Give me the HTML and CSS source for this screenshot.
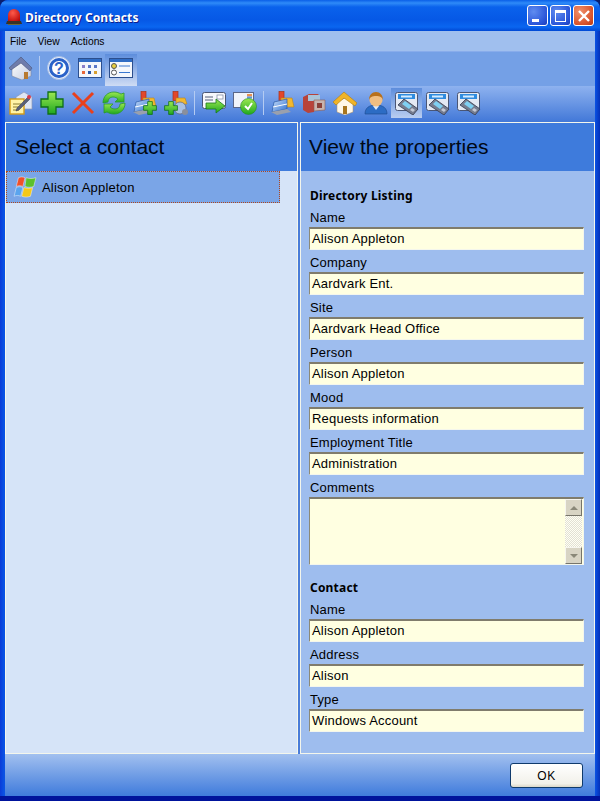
FILE: index.html
```html
<!DOCTYPE html>
<html lang="en">
<head>
  <meta charset="UTF-8" />
  <title>Directory Contacts</title>
  <link rel="stylesheet" href="styles.css">
</head>
<body>

  <!-- Shared icon parts -->
  <svg class="defs" aria-hidden="true">
    <defs>
      <linearGradient id="gGreen" x1="0" y1="0" x2="0" y2="1"><stop offset="0" stop-color="#9ce850"/><stop offset="1" stop-color="#1fa820"/></linearGradient>
      <linearGradient id="gBlue" x1="0" y1="0" x2="1" y2="1"><stop offset="0" stop-color="#cfe2fb"/><stop offset="1" stop-color="#2d6fd0"/></linearGradient>
      <linearGradient id="gPaper" x1="0" y1="0" x2="1" y2="1"><stop offset="0" stop-color="#ffffff"/><stop offset="1" stop-color="#c4cce0"/></linearGradient>
      <radialGradient id="gRed" cx="0.4" cy="0.3" r="0.8"><stop offset="0" stop-color="#ff5a4a"/><stop offset="1" stop-color="#b80404"/></radialGradient>
      <symbol id="phone" viewBox="0 0 24 24">
        <rect x="0.500" y="1.500" width="22" height="18" rx="2" fill="#e4e9f3" stroke="#4a5675"/>
        <rect x="3" y="3" width="17" height="5" fill="#2f8ce0"/>
        <path d="M6 4.500h11v2H6z" fill="#d6ecff"/>
        <path d="M3 14l6-6 14 10-5 6z" fill="#767d90" stroke="#333a4e" stroke-width=".8"/>
        <path d="M7 13l3-3 7 5-3 3z" fill="#7fd0f2"/>
        <path d="M15 19l2-2 3 2-2 2z" fill="#c4c9d4"/>
      </symbol>
      <symbol id="cabinet" viewBox="0 0 24 24">
        <rect x="8" y="0.500" width="5" height="9" fill="#e2472b" stroke="#a83218" stroke-width=".7"/>
        <path d="M10 7h11l2 9H10z" fill="#f3b82e" stroke="#b9851a" stroke-width=".6"/>
        <path d="M3 11l13-3v10L1 21z" fill="url(#gBlue)" stroke="#2a5aa8" stroke-width=".7"/>
        <path d="M2 16l14-3" stroke="#fff"/>
        <path d="M0 21l16-3 4 3-14 3z" fill="#9aa0ad"/>
      </symbol>
      <symbol id="plus" viewBox="0 0 24 24">
        <path d="M8 1h8v7h7v8h-7v7H8v-7H1V8h7z" fill="url(#gGreen)" stroke="#0f6e16" stroke-width="1.300"/>
      </symbol>
    </defs>
  </svg>

  <div class="window">

    <!-- Title bar -->
    <div class="titlebar">
      <svg class="title-icon" width="16" height="16" viewBox="0 0 16 16">
        <path d="M2 13V6a6 6 0 0 1 12 0v7z" fill="url(#gRed)"/>
        <path d="M1 12h14l1 3H0z" fill="#3a3226"/>
        <path d="M2 15h12v1H2z" fill="#6e6a3a"/>
      </svg>
      <span class="title-text">Directory Contacts</span>
      <div class="title-buttons">
        <div class="wbtn"><span class="wmin"></span></div>
        <div class="wbtn"><span class="wmax"></span></div>
        <div class="wbtn wclose">
          <svg width="12" height="12" viewBox="0 0 12 12"><path d="M1 1l10 10M11 1L1 11" stroke="#fff" stroke-width="2.400"/></svg>
        </div>
      </div>
    </div>

    <div class="client">

      <div class="menubar">
        <span>File</span>
        <span>View</span>
        <span>Actions</span>
      </div>

      <!-- Top toolbar -->
      <div class="toolbar toolbar-top">
        <div class="tool">
          <svg width="24" height="24" viewBox="0 0 24 24">
            <path d="M3 12l9-8 10 10v6l-9 4-10-4z" fill="url(#gPaper)" stroke="#7a7f90" stroke-width=".5"/>
            <path d="M0 12L12 1l11 11-2 3-9-8-10 7z" fill="#6f7cab" stroke="#4a5478" stroke-width=".6"/>
            <rect x="15" y="16" width="4" height="7" fill="#b87a30"/>
          </svg>
        </div>
        <div class="sep"></div>
        <div class="tool">
          <svg width="24" height="24" viewBox="0 0 24 24">
            <circle cx="12" cy="12" r="11.500" fill="#e4edfb" stroke="#a8bee4"/>
            <circle cx="12" cy="12" r="8.500" fill="#fff" stroke="#2a62c8" stroke-width="3"/>
            <text x="12" y="17.500" class="help-mark">?</text>
          </svg>
        </div>
        <div class="tool">
          <svg width="24" height="24" viewBox="0 0 24 24">
            <rect x=".5" y="2.500" width="23" height="19" fill="#f4f7fc" stroke="#2c4f8e"/>
            <rect x="1" y="3" width="22" height="3" fill="#2f6cc4"/>
            <path d="M4 9h3v3H4z" fill="#8a7fc8"/><path d="M10 9h3v3h-3z" fill="#5a78c8"/><path d="M16 9h3v3h-3z" fill="#5a78c8"/>
            <path d="M4 15h3v3H4z" fill="#e8683a"/><path d="M10 15h3v3h-3z" fill="#2a58a8"/><path d="M16 15h3v3h-3z" fill="#d8a030"/>
          </svg>
        </div>
        <div class="tool tool-on">
          <svg width="24" height="24" viewBox="0 0 24 24">
            <rect x=".5" y="2.500" width="23" height="19" fill="#f4f7fc" stroke="#2c4f8e"/>
            <rect x="1" y="3" width="22" height="3" fill="#2f6cc4"/>
            <circle cx="5" cy="10" r="2.500" fill="#e8d040" stroke="#555"/>
            <circle cx="5" cy="16.500" r="2.500" fill="#fff" stroke="#555"/>
            <path d="M10 10h11M10 16.500h11" stroke="#3a78d0" stroke-width="1.200"/>
          </svg>
        </div>
      </div>

      <!-- Action toolbar -->
      <div class="toolbar toolbar-main">
        <div class="tool">
          <svg width="24" height="24" viewBox="0 0 24 24">
            <path d="M7 6l8-5 8 5v12H7z" fill="#dfe6f4" stroke="#8c98b4" stroke-width=".7"/>
            <rect x="1" y="8" width="14" height="15" fill="#fff3a6" stroke="#d49a16" stroke-width="1.400"/>
            <path d="M4 13h8M4 16h8M4 19h6" stroke="#8a7a30"/>
            <path d="M8 17l11-11 2 2-11 11-3 1z" fill="#5a6078" stroke="#333a50" stroke-width=".5"/>
            <circle cx="20" cy="6" r="2" fill="#d83a4a"/>
          </svg>
        </div>
        <div class="tool"><svg width="24" height="24" viewBox="0 0 24 24"><use href="#plus"/></svg></div>
        <div class="tool">
          <svg width="24" height="24" viewBox="0 0 24 24"><path d="M2 2l20 20M22 2L2 22" stroke="#e8401c" stroke-width="3"/></svg>
        </div>
        <div class="tool">
          <svg width="24" height="24" viewBox="0 0 24 24">
            <path d="M1 12C1 5 6 1 12 1c3 0 5 1 7 2l3-1v9h-9l3-3c-1-1-3-2-5-2-3 0-5 2-5 5z" fill="url(#gGreen)" stroke="#2a9a2a" stroke-width=".8"/>
            <path d="M23 12c0 7-5 11-11 11-3 0-5-1-7-2l-3 1v-9h9l-3 3c1 1 3 2 5 2 3 0 5-2 5-5z" fill="url(#gGreen)" stroke="#2a9a2a" stroke-width=".8"/>
          </svg>
        </div>
        <div class="tool">
          <svg width="24" height="24" viewBox="0 0 24 24">
            <use href="#cabinet"/>
            <svg x="10" y="10" width="14" height="14" viewBox="0 0 24 24"><use href="#plus"/></svg>
          </svg>
        </div>
        <div class="tool">
          <svg width="24" height="24" viewBox="0 0 24 24">
            <rect x="9" y="0.500" width="5" height="9" fill="#e2472b" stroke="#a83218" stroke-width=".7"/>
            <path d="M12 7h9l2 6H12z" fill="#f3b82e" stroke="#b9851a" stroke-width=".6"/>
            <circle cx="16" cy="17" r="6" fill="#a8c0e4" stroke="#667" stroke-width=".7"/>
            <circle cx="21" cy="21" r="3" fill="#8a8f9c"/>
            <svg x="0" y="10" width="14" height="14" viewBox="0 0 24 24"><use href="#plus"/></svg>
          </svg>
        </div>
        <div class="sep"></div>
        <div class="tool">
          <svg width="24" height="24" viewBox="0 0 24 24">
            <rect x=".5" y="1.500" width="23" height="16" rx="2" fill="#f6f7fb" stroke="#4a5675"/>
            <rect x="15" y="4" width="6" height="4" fill="#fff" stroke="#7a84a0" stroke-width=".7"/>
            <path d="M3 6h8M3 9h8" stroke="#555e78"/>
            <path d="M4 12h10V8l9 7-9 7v-4H4z" fill="url(#gGreen)" stroke="#167a1a" stroke-width=".8"/>
          </svg>
        </div>
        <div class="tool">
          <svg width="24" height="24" viewBox="0 0 24 24">
            <rect x=".5" y="1.500" width="20" height="15" fill="#f0f3fa" stroke="#5a6688"/>
            <rect x="14" y="3" width="5" height="2.500" fill="#e89050"/><rect x="14" y="5.500" width="5" height="2" fill="#5a98e0"/>
            <circle cx="15.500" cy="15.500" r="8" fill="url(#gGreen)" stroke="#2a8a2a" stroke-width=".6"/>
            <path d="M12 15l3 3 4-6" fill="none" stroke="#fff" stroke-width="2"/>
          </svg>
        </div>
        <div class="sep"></div>
        <div class="tool"><svg width="24" height="24" viewBox="0 0 24 24"><use href="#cabinet"/></svg></div>
        <div class="tool">
          <svg width="24" height="24" viewBox="0 0 24 24">
            <path d="M1 6l6-3h10l-5 4v14l-6 1-5-3z" fill="#b8433a"/>
            <path d="M6 4h12v6H6z" fill="#a8c4d8"/>
            <path d="M12 9h11v10l-11 1z" fill="#c8b4ae" stroke="#8c5a50" stroke-width=".6"/>
            <path d="M15 12h5v5h-5z" fill="#8a4038"/>
          </svg>
        </div>
        <div class="tool">
          <svg width="24" height="24" viewBox="0 0 24 24">
            <path d="M4 11l8-4 8 5v9l-8 3-8-3z" fill="#fff8e8" stroke="#b09060" stroke-width=".5"/>
            <path d="M0 11L11 1l13 11-2 3-11-8-8 7z" fill="#f0b428" stroke="#b07c10" stroke-width=".6"/>
            <rect x="10" y="15" width="4" height="8" fill="#a8761e"/>
          </svg>
        </div>
        <div class="tool">
          <svg width="24" height="24" viewBox="0 0 24 24">
            <path d="M1 23c0-6 4-9 11-9s11 3 11 9z" fill="#2c6cc4" stroke="#1c488c" stroke-width=".6"/>
            <path d="M9 15l3 4 3-4z" fill="#dfe9f8"/>
            <circle cx="12" cy="9" r="6.500" fill="#f0be82"/>
            <path d="M5 9c0-5 3-8 7-8s7 3 7 8c-1-3-3-4-7-4S6 6 5 9z" fill="#b8701c"/>
          </svg>
        </div>
        <div class="tool tool-on"><svg width="24" height="24"><use href="#phone"/></svg></div>
        <div class="tool"><svg width="24" height="24"><use href="#phone"/></svg></div>
        <div class="tool"><svg width="24" height="24"><use href="#phone"/></svg></div>
      </div>

      <!-- Two panes -->
      <div class="panes">

        <div class="pane pane-left">
          <div class="pane-head">Select a contact</div>
          <div class="contact-row">
            <svg width="24" height="22" viewBox="0 1 22 19">
              <path d="M5 2c2-1 4-1 6 0l-2 8c-2-1-4-1-6 0z" fill="#f0502a" stroke="#fff" stroke-width=".4"/>
              <path d="M12 2c3 1 6 1 9 0l-2 8c-3 1-5 1-8 0z" fill="#5cc02c" stroke="#fff" stroke-width=".4"/>
              <path d="M3 11c2-1 4-1 6 0l-2 8c-2-1-4-1-6 0z" fill="#5aa4ee" stroke="#fff" stroke-width=".4"/>
              <path d="M10 11c3 1 6 1 8 0l-2 8c-3 1-5 1-8 0z" fill="#f4c818" stroke="#fff" stroke-width=".4"/>
            </svg>
            <span>Alison Appleton</span>
          </div>
        </div>

        <div class="pane pane-right">
          <div class="pane-head">View the properties</div>
          <div class="props">
            <div class="group-title">Directory Listing</div>
            <label class="prop-label">Name</label>
            <div class="field">Alison Appleton</div>
            <label class="prop-label">Company</label>
            <div class="field">Aardvark Ent.</div>
            <label class="prop-label">Site</label>
            <div class="field">Aardvark Head Office</div>
            <label class="prop-label">Person</label>
            <div class="field">Alison Appleton</div>
            <label class="prop-label">Mood</label>
            <div class="field">Requests information</div>
            <label class="prop-label">Employment Title</label>
            <div class="field">Administration</div>
            <label class="prop-label">Comments</label>
            <div class="field field-multi">
              <div class="scrollbar">
                <div class="sb-btn"><span class="arrow-up"></span></div>
                <div class="sb-track"></div>
                <div class="sb-btn"><span class="arrow-down"></span></div>
              </div>
            </div>

            <div class="group-title group-second">Contact</div>
            <label class="prop-label">Name</label>
            <div class="field">Alison Appleton</div>
            <label class="prop-label">Address</label>
            <div class="field">Alison</div>
            <label class="prop-label">Type</label>
            <div class="field">Windows Account</div>
          </div>
        </div>

      </div>

      <div class="footer">
        <button class="ok-btn" type="button">OK</button>
      </div>

    </div>
  </div>

</body>
</html>
```

FILE: styles.css
```css
html, body {
  margin: 0;
  height: 100%;
  background: #0a1f6e;
  overflow: hidden;
}
.defs {
  display: block;
  width: 0;
  height: 0;
}
.window {
  width: 600px;
  height: 801px;
  display: flex;
  flex-direction: column;
  box-sizing: border-box;
  border-radius: 8px 8px 0 0;
  background: linear-gradient(90deg, #0a3bd8 0, #0a52e4 4px, #0a52e4 595px, #0531b8 100%);
  font-family: "Liberation Sans", Arial, sans-serif;
  color: #000;
  overflow: hidden;
}
/* dark bottom edge of the frame */
.window::after {
  content: "";
  height: 5px;
  flex: none;
  background: #00139c;
}

/* Title bar */
.titlebar {
  height: 31px;
  flex: none;
  display: flex;
  align-items: center;
  box-sizing: border-box;
  padding: 3px 6px 0 6px;
  border-radius: 8px 8px 0 0;
  background: linear-gradient(180deg, #0a5fe8 0, #2f8bf8 3px, #0a62ec 7px, #0658e6 20px, #0a66f0 27px, #0048d4 31px);
}
.title-icon {
  margin-right: 3px;
}
.title-text {
  font-family: "Noto Sans", sans-serif;
  font-weight: bold;
  font-size: 12px;
  letter-spacing: .1px;
  color: #fff;
  text-shadow: 1px 1px 0 #0f1f8c;
}
.title-buttons {
  margin: -3px 0 0 auto;
  display: flex;
  gap: 2px;
}
.wbtn {
  width: 19px;
  height: 19px;
  border: 1px solid #fff;
  border-radius: 3px;
  display: flex;
  align-items: center;
  justify-content: center;
  background: radial-gradient(circle at 30% 30%, #5f8cf0, #2a55d8 70%, #1c3cb8);
}
.wclose {
  background: radial-gradient(circle at 30% 30%, #f0906c, #d8522a 70%, #b83a14);
}
.wmin {
  width: 7px;
  height: 3px;
  background: #fff;
  margin: 9px 5px 0 0;
}
.wmax {
  width: 9px;
  height: 8px;
  border: 1px solid #fff;
  border-top-width: 3px;
}

/* Client area */
.client {
  flex: 1;
  min-height: 0;
  display: flex;
  flex-direction: column;
  margin: 0 5px;
}
.menubar {
  height: 20px;
  flex: none;
  display: flex;
  align-items: center;
  gap: 11px;
  padding-left: 5px;
  background: #a0bfee;
  font-size: 10.300px;
}
.toolbar {
  flex: none;
  display: flex;
  box-sizing: border-box;
}
.toolbar-top {
  height: 35px;
  padding-top: 1px;
  background: #74a0e6;
  border-top: 1px solid #88aceb;
}
.toolbar-main {
  height: 36px;
  padding-top: 2px;
  background: linear-gradient(180deg, #8eb2ef 0, #4278d8 100%);
}
.tool {
  width: 31px;
  height: 30px;
  flex: none;
  display: flex;
  align-items: center;
  justify-content: center;
}
.tool-on {
  background: linear-gradient(180deg, #5d8ddc 0, #b9cdf0 100%);
}
.toolbar-top .tool-on {
  height: 32px;
  width: 32px;
  box-sizing: border-box;
  margin-top: 1px;
  padding-bottom: 4px;
  background: linear-gradient(180deg, #5d8ddc 0, #cfdcf4 100%);
}
.sep {
  width: 1px;
  height: 24px;
  margin: 3px 3px 0 3px;
  background: #b4cbf2;
  flex: none;
}
.help-mark {
  font-family: "Liberation Sans", Arial, sans-serif;
  font-weight: bold;
  font-size: 16px;
  fill: #2a62c8;
  text-anchor: middle;
}

/* Panes */
.panes {
  flex: 1;
  min-height: 0;
  display: flex;
  gap: 2px;
  background: #4a7cd8;
}
.pane {
  box-sizing: border-box;
  border: 1px solid #f4f6ec;
  display: flex;
  flex-direction: column;
}
.pane-left {
  width: 293px;
  background: #d6e4f8;
}
.pane-right {
  flex: 1;
  background: #9ebdee;
}
.pane-head {
  height: 48px;
  flex: none;
  display: flex;
  align-items: center;
  padding-left: 9px;
  background: #3e7bdc;
  font-size: 21px;
  color: #000814;
}
.pane-right .pane-head {
  padding-left: 8px;
}
.contact-row {
  width: 274px;
  height: 32px;
  box-sizing: border-box;
  display: flex;
  align-items: center;
  gap: 5px;
  padding-left: 6px;
  border: 1px dotted #b0461c;
  background: #7aa5e7;
  font-size: 13px;
  letter-spacing: .2px;
}

/* Properties */
.props {
  padding: 17px 10px 0 8px;
  display: flex;
  flex-direction: column;
  font-size: 13px;
  letter-spacing: .2px;
}
.group-title {
  height: 16px;
  line-height: 16px;
  font-weight: bold;
  font-family: "Noto Sans", sans-serif;
  font-size: 12px;
  letter-spacing: .2px;
  padding-left: 1px;
  margin-bottom: 6px;
}
.group-second {
  margin-top: 15px;
}
.prop-label {
  height: 16px;
  line-height: 16px;
  padding-left: 1px;
  margin-bottom: 1px;
}
.field {
  height: 23px;
  line-height: 20px;
  box-sizing: border-box;
  padding-left: 2px;
  margin-bottom: 5px;
  background: #ffffe1;
  border: 1px solid #f4f6ec;
  border-top: 2px solid #807c6c;
  border-left: 1px solid #8c8a78;
  white-space: nowrap;
}
.field-multi {
  height: 68px;
  padding: 0;
  display: flex;
  justify-content: flex-end;
  margin-bottom: 0;
}
.scrollbar {
  width: 17px;
  display: flex;
  flex-direction: column;
  margin-right: 1px;
}
.sb-btn {
  height: 17px;
  flex: none;
  box-sizing: border-box;
  display: flex;
  align-items: center;
  justify-content: center;
  background: #d8d4c4;
  border: 1px solid #f6f5ee;
  border-right-color: #77756a;
  border-bottom-color: #77756a;
}
.sb-track {
  flex: 1;
  background: repeating-conic-gradient(#fffff4 0 25%, #e2e0d4 0 50%) 0 0 / 2px 2px;
}
.arrow-up,
.arrow-down {
  width: 0;
  height: 0;
  border-left: 4px solid transparent;
  border-right: 4px solid transparent;
}
.arrow-up {
  border-bottom: 4px solid #8a8878;
}
.arrow-down {
  border-top: 4px solid #8a8878;
}

/* Footer */
.footer {
  height: 42px;
  flex: none;
  display: flex;
  justify-content: flex-end;
  align-items: flex-start;
  box-sizing: border-box;
  padding: 9px 12px 0 0;
  background: linear-gradient(180deg, #a2c0ef 0, #3f7bdc 100%);
}
.ok-btn {
  width: 73px;
  height: 25px;
  padding: 0;
  border: 1px solid #0f3a6c;
  border-radius: 3px;
  background: linear-gradient(180deg, #ffffff 0, #f2f1ea 85%, #dcd8c8 100%);
  font-family: "Liberation Sans", Arial, sans-serif;
  font-size: 12px;
  letter-spacing: .5px;
  color: #000;
}
```
